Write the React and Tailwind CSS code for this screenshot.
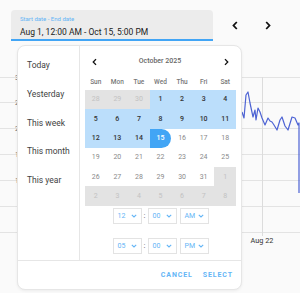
import React from "react";

const Chev = ({ dir = "left", w = 6, h = 9, sw = 1.8 }) => (
  <svg width={w} height={h} viewBox="0 0 6 9" fill="none">
    {dir === "left" ? (
      <path d="M4.8 1 L1.5 4.5 L4.8 8" stroke="#111" strokeWidth={sw} />
    ) : (
      <path d="M1.2 1 L4.5 4.5 L1.2 8" stroke="#111" strokeWidth={sw} />
    )}
  </svg>
);

const Down = () => (
  <svg width="6" height="4" viewBox="0 0 6 4" fill="none">
    <path d="M0.8 0.8 L3 3 L5.2 0.8" stroke="#64b5f6" strokeWidth="1.1" />
  </svg>
);

const Sel = ({ v }) => (
  <div className="flex items-center justify-between w-[29px] h-[16px] border border-[#e3e3e3] pl-[4px] pr-[4px] text-[7px] text-[#64b5f6]">
    <span>{v}</span>
    <Down />
  </div>
);

const rows = [
  [["28", "out"], ["29", "out"], ["30", "out"], ["1", "rng"], ["2", "rng"], ["3", "rng"], ["4", "rng"]],
  [["5", "rng"], ["6", "rng"], ["7", "rng"], ["8", "rng"], ["9", "rng"], ["10", "rng"], ["11", "rng"]],
  [["12", "rng"], ["13", "rng"], ["14", "rng"], ["15", "sel"], ["16", ""], ["17", ""], ["18", ""]],
  [["19", ""], ["20", ""], ["21", ""], ["22", ""], ["23", ""], ["24", ""], ["25", ""]],
  [["26", ""], ["27", ""], ["28", ""], ["29", ""], ["30", ""], ["31", ""], ["1", "out"]],
  [["2", "out"], ["3", "out"], ["4", "out"], ["5", "out"], ["6", "out"], ["7", "out"], ["8", "out"]],
];

const cellCls = {
  out: "bg-[#e3e3e3] text-[#c2c2c2]",
  rng: "bg-[#bbdefb] text-[#333] font-medium",
  sel: "bg-[#42a5f5] text-white font-medium rounded-r-full",
  "": "text-[#8a8a8a]",
};

export default function App() {
  return (
    <div
      className="relative w-[300px] h-[293px] overflow-hidden bg-[#fafafa]"
      style={{ fontFamily: "Roboto, 'Liberation Sans', sans-serif" }}
    >
      {/* chart behind */}
      <svg className="absolute left-0 top-0" width="300" height="293" viewBox="0 0 300 293">
        {[77, 102, 128, 154, 180, 206, 232].map((y) => (
          <line key={y} x1="0" x2="300" y1={y + 0.5} y2={y + 0.5} stroke="#e3e3e3" strokeWidth="1" />
        ))}
        <line x1="262.5" x2="262.5" y1="77" y2="236" stroke="#dcdcdc" strokeWidth="1" />
        <text x="262" y="243" fontSize="7.3" fill="#333" textAnchor="middle" fontFamily="Roboto, sans-serif">
          Aug 22
        </text>
        {[[77, "3"], [102, "2"], [128, "2"], [154, "1"], [180, "1"], [236, "."]].map(([y, t], i) => (
          <text key={i} x="19" y={y + 2.5} fontSize="7" fill="#777" textAnchor="end" fontFamily="Roboto, sans-serif">
            {t}
          </text>
        ))}
        <polyline
          fill="none"
          stroke="#4d63d4"
          strokeWidth="1.2"
          strokeLinejoin="round"
          points="242,112 244,118 246,95 248,92 250,103 253,117 255,110 256,120 258,108 260,112 262,118 265,125 268,118 270,121 272,122 274,125 277,130 280,120 282,117 285,126 288,130 292,117 295,118 298,125 299,123 299,193"
        />
      </svg>

      {/* top bar */}
      <div className="relative flex items-start pt-[10px] pl-[11px]">
        <div className="w-[202px] h-[31px] bg-[#ececec] rounded-t-[4px] border-b-2 border-[#42a5f5] pl-[9px] pt-[5px]">
          <div className="text-[6px] leading-[8px] text-[#64b5f6]">Start date - End date</div>
          <div className="text-[8.5px] leading-[12px] text-[#212121] mt-[3px]">Aug 1, 12:00 AM - Oct 15, 5:00 PM</div>
        </div>
        <div className="flex items-center gap-[27px] ml-[19px] mt-[11px]">
          <Chev dir="left" w={6} h={9} sw={1.8} />
          <Chev dir="right" w={6} h={9} sw={1.8} />
        </div>
      </div>

      {/* popup */}
      <div className="absolute left-[17px] top-[45px] w-[225px] h-[245px] bg-white rounded-[8px] border border-[#e6e6e6] shadow-[0_1px_3px_rgba(0,0,0,0.06)] flex flex-col overflow-hidden">
        <div className="flex h-[214px]">
          <div className="w-[62px] border-r border-[#e6e6e6] pl-[9px] pt-[14px] flex flex-col gap-[18.75px] text-[8.5px] leading-[10px] text-[#424242]">
            <div>Today</div>
            <div>Yesterday</div>
            <div>This week</div>
            <div>This month</div>
            <div>This year</div>
          </div>
          <div className="flex-1 flex flex-col items-center">
            <div className="w-full flex items-center justify-between pl-[12px] pr-[12px] h-[31px]">
              <Chev dir="left" w={5} h={8} sw={1.6} />
              <span className="text-[7px] font-medium text-[#666] mr-[1px]">October 2025</span>
              <Chev dir="right" w={5} h={8} sw={1.6} />
            </div>
            <div className="w-[151px] grid grid-cols-7 text-[6.5px] font-medium text-[#777] h-[12px] items-center text-center">
              {["Sun", "Mon", "Tue", "Wed", "Thu", "Fri", "Sat"].map((d) => (
                <div key={d}>{d}</div>
              ))}
            </div>
            <div className="w-[151px] mt-[1px] flex flex-col">
              {rows.map((r, i) => (
                <div key={i} className="grid grid-cols-7 h-[19.3px]">
                  {r.map(([d, k], j) => (
                    <div key={j} className={`flex items-center justify-center text-[7px] ${cellCls[k]}`}>
                      {d}
                    </div>
                  ))}
                </div>
              ))}
            </div>
            <div className="flex flex-col gap-[14px] mt-[2px]">
              {[["12", "00", "AM"], ["05", "00", "PM"]].map((t, i) => (
                <div key={i} className="flex items-center">
                  <Sel v={t[0]} />
                  <span className="text-[8px] text-[#555] w-[6px] text-center">:</span>
                  <Sel v={t[1]} />
                  <div className="w-[3px]" />
                  <Sel v={t[2]} />
                </div>
              ))}
            </div>
          </div>
        </div>
        <div className="flex-1 border-t border-[#e6e6e6] flex items-center justify-end gap-[10px] pr-[8px]">
          <span className="text-[7px] font-bold tracking-[0.9px] text-[#64b5f6]">CANCEL</span>
          <span className="text-[7px] font-bold tracking-[0.9px] text-[#64b5f6]">SELECT</span>
        </div>
      </div>
    </div>
  );
}
